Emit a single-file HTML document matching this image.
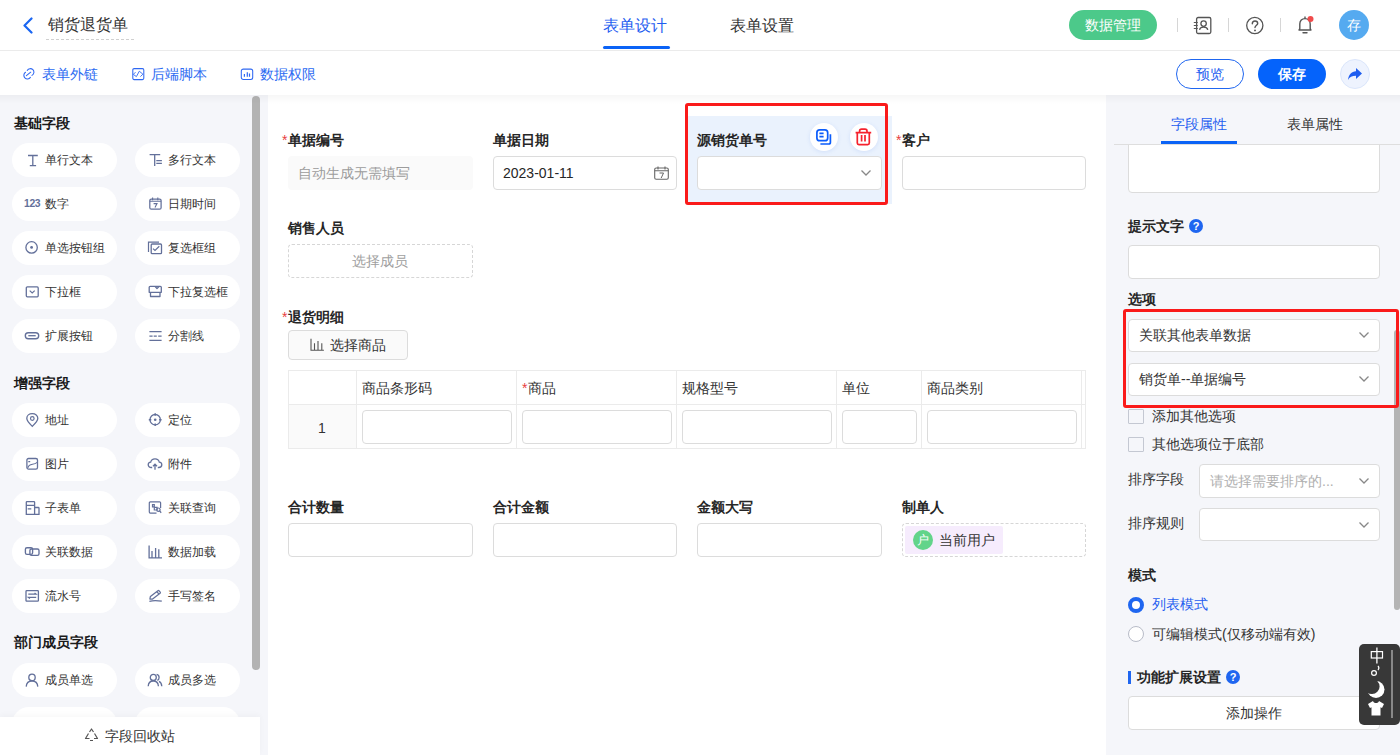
<!DOCTYPE html>
<html><head><meta charset="utf-8">
<style>
*{box-sizing:border-box;margin:0;padding:0}
html,body{width:1400px;height:755px;overflow:hidden;background:#fff;font-family:"Liberation Sans",sans-serif;color:#333}
.a{position:absolute}
svg{display:block}
/* header */
#hdr{left:0;top:0;width:1400px;height:51px;background:#fff;border-bottom:1px solid #ebebeb}
#bar2{left:0;top:51px;width:1400px;height:44px;background:#fff}
.t{white-space:nowrap;line-height:1}
.lnk{color:#2b6af2;font-size:14px}
.btnr{border-radius:15px;height:30px;font-size:14px;text-align:center;line-height:30px}
/* left panel */
#left{left:0;top:95px;width:268px;height:660px;background:#f5f6fa}
.sec{font-size:14px;font-weight:bold;color:#1a1a1a}
.pill{width:105px;height:34px;background:#fff;border-radius:17px}
.pill .ic{position:absolute;left:12px;top:10px;width:16px;height:16px;overflow:visible}
.pill .tx{position:absolute;left:33px;top:10px;font-size:12px;color:#333;line-height:14px;white-space:nowrap}
#center{left:268px;top:95px;width:838px;height:660px;background:#fff}
.lbl{font-size:14px;font-weight:bold;color:#262626;line-height:14px;white-space:nowrap}
.req{color:#e84040;font-weight:normal;position:absolute;left:-6px;top:0}
.inp{height:34px;border:1px solid #dcdcdc;border-radius:4px;background:#fff}
#right{left:1106px;top:95px;width:294px;height:660px;background:#f5f6fa}
.rl{font-size:14px;color:#262626;line-height:14px;white-space:nowrap}
</style></head><body>

<!-- ===== HEADER ===== -->
<div id="hdr" class="a"></div>
<svg class="a" style="left:22px;top:17px" width="12" height="17" viewBox="0 0 12 17"><path d="M9.5 1.5 L2.5 8.5 L9.5 15.5" fill="none" stroke="#1a66f2" stroke-width="2.2" stroke-linecap="round" stroke-linejoin="round"/></svg>
<div class="a t" style="left:48px;top:17px;font-size:16px;color:#333">销货退货单</div>
<div class="a" style="left:46px;top:39px;width:88px;border-top:1px dashed #d0d0d0"></div>

<div class="a t" style="left:603px;top:18px;font-size:16px;color:#1f5ef0">表单设计</div>
<div class="a" style="left:603px;top:46px;width:67px;height:3px;background:#0b63f6;border-radius:2px"></div>
<div class="a t" style="left:730px;top:18px;font-size:16px;color:#333">表单设置</div>

<div class="a btnr" style="left:1069px;top:10px;width:88px;background:#4cc98a;color:#fff">数据管理</div>
<div class="a" style="left:1177px;top:18px;width:1px;height:14px;background:#d6d6d6"></div>
<div class="a" style="left:1228px;top:18px;width:1px;height:14px;background:#d6d6d6"></div>
<div class="a" style="left:1280px;top:18px;width:1px;height:14px;background:#d6d6d6"></div>
<!-- contact icon -->
<svg class="a" style="left:1193px;top:16px" width="19" height="19" viewBox="0 0 19 19"><rect x="3.6" y="1.5" width="14.2" height="16" rx="1.5" fill="none" stroke="#555" stroke-width="1.3"/><circle cx="10.6" cy="7.6" r="2.7" fill="none" stroke="#555" stroke-width="1.3"/><path d="M6.6 13.8 C7.2 10.2 14 10.2 14.8 13.8" fill="none" stroke="#555" stroke-width="1.3"/><path d="M0.8 6.5h4M0.8 9.5h4M0.8 12.5h4" stroke="#555" stroke-width="1.1"/></svg>
<!-- help -->
<svg class="a" style="left:1245px;top:16px" width="20" height="20" viewBox="0 0 20 20"><circle cx="9.8" cy="9.5" r="8.1" fill="none" stroke="#555" stroke-width="1.3"/><path d="M7.3 7.8 C7.3 5.9 8.6 5 10 5 C11.6 5 12.7 6 12.7 7.4 C12.7 9.2 10 9.4 10 11.6" fill="none" stroke="#555" stroke-width="1.4" stroke-linecap="round"/><circle cx="10" cy="14.4" r="0.95" fill="#555"/></svg>
<!-- bell -->
<svg class="a" style="left:1296px;top:15px" width="19" height="20" viewBox="0 0 19 20"><path d="M3 15 L3.8 13.6 V9 C3.8 5.8 6 3.6 9 3.6 C12 3.6 14.2 5.8 14.2 9 V13.6 L15 15 Z" fill="none" stroke="#555" stroke-width="1.4" stroke-linejoin="round"/><path d="M7 17.8 H11" stroke="#555" stroke-width="1.4" stroke-linecap="round"/><path d="M9 1.5 V3.6" stroke="#555" stroke-width="1.4"/><circle cx="14.5" cy="4" r="3" fill="#f04b4b"/></svg>
<div class="a btnr" style="left:1339px;top:10px;width:30px;height:30px;border-radius:50%;background:#55aaf0;color:#fff;font-size:14px">存</div>

<!-- ===== BAR 2 ===== -->
<div id="bar2" class="a"></div>
<svg class="a" style="left:22px;top:68px" width="13" height="13" viewBox="0 0 13 13"><path d="M5.2 2.4 A3.6 3.6 0 1 1 10 7.4 M3.5 4.3 A3.6 3.6 0 1 0 8.4 9.4 M4.4 7.7 L8.7 4.2" fill="none" stroke="#2f68f2" stroke-width="1.05" stroke-linecap="round"/></svg>
<div class="a t lnk" style="left:42px;top:67px">表单外链</div>
<svg class="a" style="left:132px;top:68px" width="13" height="13" viewBox="0 0 13 13"><rect x="0.8" y="0.6" width="11" height="11" rx="1.3" fill="none" stroke="#2f68f2" stroke-width="1.05"/><path d="M3.5 4.2 L1.3 6.4 L4.4 8.6 L7.3 3.2 L10.9 6.2 L8.4 8.6" fill="none" stroke="#2f68f2" stroke-width="0.9" stroke-linejoin="round"/></svg>
<div class="a t lnk" style="left:151px;top:67px">后端脚本</div>
<svg class="a" style="left:240px;top:68px" width="14" height="13" viewBox="0 0 14 13"><rect x="1.3" y="1.1" width="11.4" height="10.3" rx="2" fill="none" stroke="#2f68f2" stroke-width="1.05"/><path d="M4.4 6 V8.8 M7.3 4.2 V8.8 M9.5 5.4 V8.8" stroke="#2f68f2" stroke-width="1.2"/></svg>
<div class="a t lnk" style="left:260px;top:67px">数据权限</div>

<div class="a btnr" style="left:1176px;top:59px;width:68px;border:1px solid #1f66f0;color:#1f5ef0;line-height:28px">预览</div>
<div class="a btnr" style="left:1258px;top:59px;width:68px;background:#0563fb;color:#fff;font-weight:bold">保存</div>
<div class="a" style="left:1340px;top:59px;width:30px;height:30px;border-radius:50%;background:#eef3fe;border:1px solid #dbe6fb"></div>
<svg class="a" style="left:1346px;top:66px" width="18" height="16" viewBox="0 0 18 16"><path d="M10 2 L16 7.5 L10 13 V9.8 C6 9.8 3.5 11 2 14 C2.5 8.8 5.5 5.6 10 5.2 Z" fill="#1f5ef0"/></svg>

<!-- ===== LEFT ===== -->
<div id="left" class="a"></div>
<div class="a t sec" style="left:14px;top:116px">基础字段</div>
<div class="a t sec" style="left:14px;top:376px">增强字段</div>
<div class="a t sec" style="left:14px;top:635px">部门成员字段</div>
<div class="a pill" style="left:12px;top:143px"><svg class="ic" width="16" height="16" viewBox="0 0 16 16"><path d="M4 2.5H13.8M8.8 2.5V12.7M5.8 12.7H12.1" stroke="#63709a" fill="none" stroke-width="1.3"/></svg><div class="tx">单行文本</div></div>
<div class="a pill" style="left:135px;top:143px"><svg class="ic" width="16" height="16" viewBox="0 0 16 16"><path d="M2.6 1.6H13.2M7.7 1.6V13.1M9.3 7.6H14.9M9.3 10.4H14.9" stroke="#63709a" fill="none" stroke-width="1.3"/></svg><div class="tx">多行文本</div></div>
<div class="a pill" style="left:12px;top:187px"><svg class="ic" width="16" height="16" viewBox="0 0 16 16"><text x="0" y="10" font-size="10.4" font-weight="bold" fill="#63709a" font-family="Liberation Sans" letter-spacing="-0.4">123</text></svg><div class="tx">数字</div></div>
<div class="a pill" style="left:135px;top:187px"><svg class="ic" width="16" height="16" viewBox="0 0 16 16"><rect x="2.8" y="2" width="11.3" height="10.2" rx="1.5" stroke="#63709a" fill="none" stroke-width="1.25"/><path d="M2.8 4.3H14.1M5.6 0.6V3.3M10.8 0.6V3.3M6.6 6.6H10L8 10.6" stroke="#63709a" fill="none" stroke-width="1.1"/></svg><div class="tx">日期时间</div></div>
<div class="a pill" style="left:12px;top:231px"><svg class="ic" width="16" height="16" viewBox="0 0 16 16"><circle cx="7.6" cy="6.4" r="5.7" stroke="#63709a" fill="none" stroke-width="1.3"/><circle cx="7.6" cy="6.4" r="1.4" fill="#63709a"/></svg><div class="tx">单选按钮组</div></div>
<div class="a pill" style="left:135px;top:231px"><svg class="ic" width="16" height="16" viewBox="0 0 16 16"><path d="M1.5 11V1.2H12" stroke="#63709a" fill="none" stroke-width="1.2"/><rect x="4.2" y="3" width="10.3" height="9.7" rx="1" stroke="#63709a" fill="none" stroke-width="1.3"/><path d="M6 7.6L8 9.5L12.3 5.3" stroke="#63709a" fill="none" stroke-width="1.2"/></svg><div class="tx">复选框组</div></div>
<div class="a pill" style="left:12px;top:275px"><svg class="ic" width="16" height="16" viewBox="0 0 16 16"><rect x="2.3" y="1.9" width="11.9" height="9.9" rx="1" stroke="#63709a" fill="none" stroke-width="1.3"/><path d="M5.7 5.6L8.2 7.9L10.7 5.6" stroke="#63709a" fill="none" stroke-width="1.2"/></svg><div class="tx">下拉框</div></div>
<div class="a pill" style="left:135px;top:275px"><svg class="ic" width="16" height="16" viewBox="0 0 16 16"><path d="M2.2 7.3V2.3C2.2 1.7 2.6 1.3 3.2 1.3H13.3C13.9 1.3 14.3 1.7 14.3 2.3V7.3ZM3.5 7.3V11.5H13V7.3M8.2 1.5L10 3.6L12 1.5" stroke="#63709a" fill="none" stroke-width="1.3" stroke-linejoin="round"/></svg><div class="tx">下拉复选框</div></div>
<div class="a pill" style="left:12px;top:319px"><svg class="ic" width="16" height="16" viewBox="0 0 16 16"><rect x="1.3" y="3.7" width="13.4" height="6" rx="3" stroke="#63709a" fill="none" stroke-width="1.35"/><path d="M4.3 6.7H11.7" stroke="#63709a" fill="none" stroke-width="1.3"/></svg><div class="tx">扩展按钮</div></div>
<div class="a pill" style="left:135px;top:319px"><svg class="ic" width="16" height="16" viewBox="0 0 16 16"><path d="M2.4 2.7H14.6M2.4 11.4H14.6M2.4 7.2H5.6M6.7 7.2H9.8M11.2 7.2H14.6" stroke="#63709a" fill="none" stroke-width="1.3"/></svg><div class="tx">分割线</div></div>
<div class="a pill" style="left:12px;top:403px"><svg class="ic" width="16" height="16" viewBox="0 0 16 16"><path d="M8.3 13.4C4.6 9.8 2.8 7.4 2.8 5.3C2.8 2.6 5.2 0.7 8.3 0.7C11.4 0.7 13.8 2.6 13.8 5.3C13.8 7.4 12 9.8 8.3 13.4Z" stroke="#63709a" fill="none" stroke-width="1.3"/><circle cx="8.3" cy="5.5" r="1.8" stroke="#63709a" fill="none" stroke-width="1.2"/></svg><div class="tx">地址</div></div>
<div class="a pill" style="left:135px;top:403px"><svg class="ic" width="16" height="16" viewBox="0 0 16 16"><circle cx="8.2" cy="6.7" r="5.2" stroke="#63709a" fill="none" stroke-width="1.3"/><circle cx="8.2" cy="6.7" r="1.3" fill="#63709a"/><path d="M8.2 0.3V2.8M8.2 10.6V13.1M1.8 6.7H4.3M12.1 6.7H14.6" stroke="#63709a" fill="none" stroke-width="1.4"/></svg><div class="tx">定位</div></div>
<div class="a pill" style="left:12px;top:447px"><svg class="ic" width="16" height="16" viewBox="0 0 16 16"><rect x="2.9" y="1.5" width="10.6" height="10.6" rx="1.6" stroke="#63709a" fill="none" stroke-width="1.3"/><path d="M3.8 10.8C4.5 8.3 6.5 7.6 8.5 7.3C10.4 7 11.9 6.4 13.2 5.4M4.3 4.6H6.2" stroke="#63709a" fill="none" stroke-width="1.15"/></svg><div class="tx">图片</div></div>
<div class="a pill" style="left:135px;top:447px"><svg class="ic" width="16" height="16" viewBox="0 0 16 16"><path d="M5.2 10.5H4.3C2.5 10.5 1.2 9.3 1.2 7.8C1.2 6.3 2.3 5.2 3.7 5.1C4.1 3.1 5.8 1.8 8 1.8C10.2 1.8 11.9 3.2 12.3 5.1C13.7 5.2 14.8 6.3 14.8 7.8C14.8 9.3 13.5 10.5 11.7 10.5H10.8" stroke="#63709a" fill="none" stroke-width="1.3"/><path d="M8 12.8V7.5M6 9.2L8 7.2L10 9.2" stroke="#63709a" fill="none" stroke-width="1.3"/></svg><div class="tx">附件</div></div>
<div class="a pill" style="left:12px;top:491px"><svg class="ic" width="16" height="16" viewBox="0 0 16 16"><path d="M2.3 13.3V1.3C2.3 0.9 2.6 0.6 3 0.6H9.9C10.3 0.6 10.6 0.9 10.6 1.3V13.3ZM10.6 6.5H14.3C14.7 6.5 15 6.8 15 7.2V13.3H10.6M2.3 4.3H10.6M3.7 7.9H7.3" stroke="#63709a" fill="none" stroke-width="1.3"/></svg><div class="tx">子表单</div></div>
<div class="a pill" style="left:135px;top:491px"><svg class="ic" width="16" height="16" viewBox="0 0 16 16"><path d="M13.6 7V1.9C13.6 1.3 13.2 0.9 12.6 0.9H3.3C2.7 0.9 2.3 1.3 2.3 1.9V11.1C2.3 11.7 2.7 12.1 3.3 12.1H9.5M5.5 3.6H7.3V5.8H5.5ZM7.3 6.3H10.1V9H7.3Z" stroke="#63709a" fill="none" stroke-width="1.2"/><circle cx="11.4" cy="8.7" r="1.7" stroke="#63709a" fill="none" stroke-width="1.2"/><path d="M12.6 9.9L14.2 11.7" stroke="#63709a" fill="none" stroke-width="1.3"/></svg><div class="tx">关联查询</div></div>
<div class="a pill" style="left:12px;top:535px"><svg class="ic" width="16" height="16" viewBox="0 0 16 16"><rect x="1.4" y="2.7" width="7.2" height="6.7" rx="1.6" fill="none" stroke="#63709a" stroke-width="1.35"/><rect x="5.9" y="4" width="9.1" height="6.3" rx="1.6" fill="none" stroke="#63709a" stroke-width="1.35"/></svg><div class="tx">关联数据</div></div>
<div class="a pill" style="left:135px;top:535px"><svg class="ic" width="16" height="16" viewBox="0 0 16 16"><path d="M2.1 0.5V12.8H15M5 6V12.8M8.6 2.9V12.8M11.8 4.2V12.8" stroke="#63709a" fill="none" stroke-width="1.3"/></svg><div class="tx">数据加载</div></div>
<div class="a pill" style="left:12px;top:579px"><svg class="ic" width="16" height="16" viewBox="0 0 16 16"><rect x="2" y="1.6" width="12.4" height="10.6" rx="0.8" stroke="#63709a" fill="none" stroke-width="1.3"/><path d="M4.3 5.2H12.2L10.6 3.9M12.2 8.3H4.3L5.9 9.6" stroke="#63709a" fill="none" stroke-width="1.2"/></svg><div class="tx">流水号</div></div>
<div class="a pill" style="left:135px;top:579px"><svg class="ic" width="16" height="16" viewBox="0 0 16 16"><path d="M2.9 10L3.4 7.4L10.9 1.7C11.3 1.4 11.8 1.5 12.1 1.8L13.2 3.1C13.5 3.5 13.4 4 13.1 4.3L5.6 10Z M9.8 2.8L12.1 5.1" stroke="#63709a" fill="none" stroke-width="1.25" stroke-linejoin="round"/><path d="M2.4 12.3C6 11.3 10 11.3 14.8 12.2" stroke="#63709a" fill="none" stroke-width="1.3"/></svg><div class="tx">手写签名</div></div>
<div class="a pill" style="left:12px;top:663px"><svg class="ic" width="16" height="16" viewBox="0 0 16 16"><circle cx="8" cy="4.4" r="3.2" stroke="#63709a" fill="none" stroke-width="1.3"/><path d="M2.2 13.6C2.5 9.6 4.8 8 8 8C11.2 8 13.5 9.6 13.8 13.6" stroke="#63709a" fill="none" stroke-width="1.3"/></svg><div class="tx">成员单选</div></div>
<div class="a pill" style="left:135px;top:663px"><svg class="ic" width="16" height="16" viewBox="0 0 16 16"><circle cx="6.3" cy="4.4" r="3" stroke="#63709a" fill="none" stroke-width="1.3"/><path d="M1.2 13.2C1.4 9.6 3.4 8 6.3 8C9.2 8 11.2 9.6 11.4 13.2M9.6 1.4C11.1 1.7 12.1 2.9 12.1 4.4C12.1 5.7 11.4 6.8 10.3 7.3M12 8.4C13.6 9.2 14.6 10.8 14.8 13.2" stroke="#63709a" fill="none" stroke-width="1.3"/></svg><div class="tx">成员多选</div></div>
<div class="a pill" style="left:12px;top:707px"><svg class="ic" width="16" height="16" viewBox="0 0 16 16"><circle cx="8" cy="4.4" r="3.2" stroke="#63709a" fill="none" stroke-width="1.3"/><path d="M2.2 13.6C2.5 9.6 4.8 8 8 8C11.2 8 13.5 9.6 13.8 13.6" stroke="#63709a" fill="none" stroke-width="1.3"/></svg><div class="tx">部门单选</div></div>
<div class="a pill" style="left:135px;top:707px"><svg class="ic" width="16" height="16" viewBox="0 0 16 16"><circle cx="6.3" cy="4.4" r="3" stroke="#63709a" fill="none" stroke-width="1.3"/><path d="M1.2 13.2C1.4 9.6 3.4 8 6.3 8C9.2 8 11.2 9.6 11.4 13.2M9.6 1.4C11.1 1.7 12.1 2.9 12.1 4.4C12.1 5.7 11.4 6.8 10.3 7.3M12 8.4C13.6 9.2 14.6 10.8 14.8 13.2" stroke="#63709a" fill="none" stroke-width="1.3"/></svg><div class="tx">部门多选</div></div>
<div class="a" style="left:252px;top:96px;width:8px;height:574px;background:#b3b3b3;border-radius:4px"></div>
<div class="a" style="left:0;top:717px;width:260px;height:38px;background:#fff;box-shadow:0 -2px 6px rgba(0,0,0,0.03)"></div>
<svg class="a" style="left:84px;top:728px" width="15" height="14" viewBox="0 0 15 14"><path d="M5.5 4 L7.5 1 L9.5 4 M10.5 5.5 L13.5 10.5 H10 M4.5 5.5 L1.5 10.5 H5.5 M6 12.5h3" fill="none" stroke="#555" stroke-width="1.2" stroke-linejoin="round"/></svg>
<div class="a t" style="left:105px;top:729px;font-size:14px;color:#333">字段回收站</div>

<!-- ===== CENTER ===== -->
<div id="center" class="a"></div>
<div class="a" style="left:688px;top:116px;width:204px;height:88px;background:#eaf2fd"></div>
<div class="a lbl" style="left:288px;top:133px"><span class="req">*</span>单据编号</div>
<div class="a lbl" style="left:493px;top:133px">单据日期</div>
<div class="a lbl" style="left:697px;top:133px">源销货单号</div>
<div class="a lbl" style="left:902px;top:133px"><span class="req">*</span>客户</div>
<div class="a" style="left:288px;top:156px;width:185px;height:34px;background:#fafafa;border-radius:4px"></div>
<div class="a t" style="left:298px;top:166px;font-size:14px;color:#9c9c9c">自动生成无需填写</div>
<div class="a inp" style="left:493px;top:156px;width:184px"></div>
<div class="a t" style="left:503px;top:166px;font-size:14px;color:#262626">2023-01-11</div>
<svg class="a" style="left:654px;top:166px" width="15" height="14" viewBox="0 0 15 14"><rect x="0.7" y="2" width="13.6" height="11.3" rx="1.5" fill="none" stroke="#666" stroke-width="1.1"/><path d="M0.7 4.8h13.6M4 0.5v3M11 0.5v3" stroke="#666" stroke-width="1.1"/><path d="M5.5 7h4l-2.3 5" fill="none" stroke="#666" stroke-width="1"/></svg>
<div class="a inp" style="left:697px;top:156px;width:185px"></div>
<svg class="a" style="left:860px;top:169px" width="12" height="8" viewBox="0 0 12 8"><path d="M1.5 1.5 L6 6 L10.5 1.5" fill="none" stroke="#888" stroke-width="1.3"/></svg>
<div class="a inp" style="left:902px;top:156px;width:184px"></div>
<div class="a" style="left:810px;top:123px;width:28px;height:28px;border-radius:50%;background:#fff;box-shadow:0 1px 4px rgba(40,100,220,0.12)"></div>
<svg class="a" style="left:815px;top:128px" width="18" height="18" viewBox="0 0 18 18"><rect x="1.9" y="1.9" width="10.8" height="10.8" rx="2.8" fill="none" stroke="#0b5cfb" stroke-width="1.7"/><path d="M4.4 5.4H8.6M4.4 8.6H8.6" stroke="#0b5cfb" stroke-width="1.6"/><path d="M15.4 6.3V14.2C15.4 15.2 14.8 16 13.8 16H5.4" fill="none" stroke="#0b5cfb" stroke-width="1.7"/></svg>
<div class="a" style="left:850px;top:123px;width:28px;height:28px;border-radius:50%;background:#fff;box-shadow:0 1px 4px rgba(40,100,220,0.12)"></div>
<svg class="a" style="left:855px;top:127px" width="18" height="19" viewBox="0 0 18 19"><path d="M0.6 5.6H16.2M4.6 5.6V4C4.6 2.8 5.5 2.1 6.6 2.1H10C11.1 2.1 12 2.8 12 4V5.6M2.3 5.6V16C2.3 17 3 17.6 3.9 17.6H12.7C13.6 17.6 14.3 17 14.3 16V5.6M6.6 8.1V14.4M10 8.1V14.4" fill="none" stroke="#f5222d" stroke-width="1.7"/></svg>
<div class="a" style="left:685px;top:103px;width:203px;height:102px;border:3px solid #fa1a1a;border-radius:3px"></div>
<div class="a lbl" style="left:288px;top:221px">销售人员</div>
<div class="a" style="left:288px;top:244px;width:185px;height:34px;border:1px dashed #d6d6d6;border-radius:4px"></div>
<div class="a t" style="left:352px;top:254px;font-size:14px;color:#a0a0a0">选择成员</div>
<div class="a lbl" style="left:288px;top:310px"><span class="req">*</span>退货明细</div>
<div class="a" style="left:288px;top:330px;width:120px;height:30px;border:1px solid #dcdcdc;border-radius:4px;background:#fafafa"></div>
<svg class="a" style="left:310px;top:338px" width="14" height="13" viewBox="0 0 14 13"><path d="M1 0.7V12.3H13.9M4.5 5.3v6.5M8 3v8.8M11.8 5.3v6.5" stroke="#555" stroke-width="1.1" fill="none"/></svg>
<div class="a t" style="left:330px;top:338px;font-size:14px;color:#333">选择商品</div>
<div class="a" style="left:288px;top:370px;width:798px;height:79px;border:1px solid #ebebeb"></div>
<div class="a" style="left:289px;top:405px;width:67px;height:43px;background:#fafafa"></div>
<div class="a" style="left:288px;top:404px;width:798px;height:1px;background:#ebebeb"></div>
<div class="a" style="left:356px;top:370px;width:1px;height:79px;background:#ebebeb"></div>
<div class="a" style="left:516px;top:370px;width:1px;height:79px;background:#ebebeb"></div>
<div class="a" style="left:676px;top:370px;width:1px;height:79px;background:#ebebeb"></div>
<div class="a" style="left:836px;top:370px;width:1px;height:79px;background:#ebebeb"></div>
<div class="a" style="left:921px;top:370px;width:1px;height:79px;background:#ebebeb"></div>
<div class="a" style="left:1081px;top:370px;width:1px;height:79px;background:#ebebeb"></div>
<div class="a t" style="left:362px;top:381px;font-size:14px;color:#333">商品条形码</div>
<div class="a t" style="left:528px;top:381px;font-size:14px;color:#333"><span class="req">*</span>商品</div>
<div class="a t" style="left:682px;top:381px;font-size:14px;color:#333">规格型号</div>
<div class="a t" style="left:842px;top:381px;font-size:14px;color:#333">单位</div>
<div class="a t" style="left:927px;top:381px;font-size:14px;color:#333">商品类别</div>
<div class="a t" style="left:318px;top:421px;font-size:14px;color:#333">1</div>
<div class="a inp" style="left:362px;top:410px;width:150px;height:34px"></div>
<div class="a inp" style="left:522px;top:410px;width:150px;height:34px"></div>
<div class="a inp" style="left:682px;top:410px;width:150px;height:34px"></div>
<div class="a inp" style="left:842px;top:410px;width:75px;height:34px"></div>
<div class="a inp" style="left:927px;top:410px;width:150px;height:34px"></div>
<div class="a lbl" style="left:288px;top:500px">合计数量</div>
<div class="a lbl" style="left:493px;top:500px">合计金额</div>
<div class="a lbl" style="left:697px;top:500px">金额大写</div>
<div class="a lbl" style="left:902px;top:500px">制单人</div>
<div class="a inp" style="left:288px;top:523px;width:185px"></div>
<div class="a inp" style="left:493px;top:523px;width:184px"></div>
<div class="a inp" style="left:697px;top:523px;width:185px"></div>
<div class="a" style="left:902px;top:523px;width:184px;height:34px;border:1px dashed #d6d6d6;border-radius:4px"></div>
<div class="a" style="left:905px;top:526px;width:98px;height:28px;background:#f6ecfd;border-radius:2px"></div>
<div class="a" style="left:913px;top:530px;width:20px;height:20px;border-radius:50%;background:#62d48a;color:#fff;font-size:12px;line-height:20px;text-align:center">户</div>
<div class="a t" style="left:939px;top:533px;font-size:14px;color:#333">当前用户</div>

<!-- ===== RIGHT ===== -->
<div id="right" class="a"></div>
<div class="a" style="left:1128px;top:120px;width:252px;height:73px;background:#fff;border:1px solid #dcdcdc;border-radius:4px"></div>
<div class="a" style="left:1106px;top:95px;width:294px;height:50px;background:#f5f6fa"></div>
<div class="a" style="left:1114px;top:144px;width:286px;height:1px;background:#dedede"></div>
<div class="a t" style="left:1171px;top:117px;font-size:14px;color:#1f5ef0">字段属性</div>
<div class="a" style="left:1161px;top:141px;width:76px;height:3px;background:#0b63f6"></div>
<div class="a t" style="left:1287px;top:117px;font-size:14px;color:#333">表单属性</div>
<div class="a lbl" style="left:1128px;top:219px">提示文字</div>
<div class="a" style="left:1189px;top:219px;width:14px;height:14px;border-radius:50%;background:#1f66f0;color:#fff;font-size:11px;font-weight:bold;line-height:14px;text-align:center">?</div>
<div class="a inp" style="left:1128px;top:245px;width:252px;height:34px"></div>
<div class="a lbl" style="left:1128px;top:292px">选项</div>
<div class="a inp" style="left:1128px;top:319px;width:252px;height:33px"></div>
<div class="a t" style="left:1139px;top:328px;font-size:14px;color:#333">关联其他表单数据</div>
<svg class="a" style="left:1358px;top:331px" width="12" height="8" viewBox="0 0 12 8"><path d="M1.5 1.5 L6 6 L10.5 1.5" fill="none" stroke="#888" stroke-width="1.3"/></svg>
<div class="a inp" style="left:1128px;top:363px;width:252px;height:33px"></div>
<div class="a t" style="left:1139px;top:372px;font-size:14px;color:#333">销货单--单据编号</div>
<svg class="a" style="left:1358px;top:375px" width="12" height="8" viewBox="0 0 12 8"><path d="M1.5 1.5 L6 6 L10.5 1.5" fill="none" stroke="#888" stroke-width="1.3"/></svg>
<div class="a" style="left:1394px;top:330px;width:6px;height:280px;background:#b4b4b4;border-radius:3px"></div>
<div class="a" style="left:1123px;top:309px;width:276px;height:99px;border:3px solid #fa1a1a;border-radius:3px"></div>
<div class="a" style="left:1128px;top:409px;width:16px;height:15px;border:1px solid #c4c8d2;border-radius:1px;background:transparent"></div>
<div class="a t" style="left:1152px;top:409px;font-size:14px;color:#333">添加其他选项</div>
<div class="a" style="left:1128px;top:437px;width:16px;height:15px;border:1px solid #c4c8d2;border-radius:1px;background:transparent"></div>
<div class="a t" style="left:1152px;top:437px;font-size:14px;color:#333">其他选项位于底部</div>
<div class="a t" style="left:1128px;top:472px;font-size:14px;color:#333">排序字段</div>
<div class="a inp" style="left:1199px;top:464px;width:181px;height:34px"></div>
<div class="a t" style="left:1210px;top:474px;font-size:14px;color:#b0b0b0">请选择需要排序的...</div>
<svg class="a" style="left:1358px;top:477px" width="12" height="8" viewBox="0 0 12 8"><path d="M1.5 1.5 L6 6 L10.5 1.5" fill="none" stroke="#888" stroke-width="1.3"/></svg>
<div class="a t" style="left:1128px;top:516px;font-size:14px;color:#333">排序规则</div>
<div class="a inp" style="left:1199px;top:508px;width:181px;height:33px"></div>
<svg class="a" style="left:1358px;top:521px" width="12" height="8" viewBox="0 0 12 8"><path d="M1.5 1.5 L6 6 L10.5 1.5" fill="none" stroke="#888" stroke-width="1.3"/></svg>
<div class="a lbl" style="left:1128px;top:568px">模式</div>
<div class="a" style="left:1128px;top:597px;width:16px;height:16px;border-radius:50%;border:4px solid #1f66f0;background:#fff"></div>
<div class="a t" style="left:1152px;top:597px;font-size:14px;color:#1f5ef0">列表模式</div>
<div class="a" style="left:1128px;top:626px;width:16px;height:16px;border-radius:50%;border:1px solid #b8bcc8;background:#fff"></div>
<div class="a t" style="left:1152px;top:627px;font-size:14px;color:#333">可编辑模式(仅移动端有效)</div>
<div class="a" style="left:1128px;top:671px;width:3px;height:13px;background:#1f66f0"></div>
<div class="a lbl" style="left:1137px;top:670px">功能扩展设置</div>
<div class="a" style="left:1226px;top:670px;width:14px;height:14px;border-radius:50%;background:#1f66f0;color:#fff;font-size:11px;font-weight:bold;line-height:14px;text-align:center">?</div>
<div class="a" style="left:1128px;top:696px;width:252px;height:34px;background:#fff;border:1px solid #dcdcdc;border-radius:4px;font-size:14px;color:#333;text-align:center;line-height:32px">添加操作</div>
<div class="a" style="left:1359px;top:644px;width:41px;height:81px;background:#383838;border-radius:5px"></div>
<div class="a" style="left:1391px;top:650px;width:2px;height:68px;background:#888"></div>
<svg class="a" style="left:1370px;top:647px" width="14" height="17" viewBox="0 0 14 17"><rect x="1.3" y="4.6" width="11.2" height="6.4" fill="none" stroke="#fff" stroke-width="1.2"/><path d="M6.9 0.6V16.6" stroke="#fff" stroke-width="1.3"/></svg>
<svg class="a" style="left:1370px;top:665px" width="12" height="12" viewBox="0 0 12 12"><circle cx="4" cy="8" r="2.4" fill="none" stroke="#fff" stroke-width="1.2"/><path d="M8 1 A3 3 0 0 1 8 5" fill="none" stroke="#fff" stroke-width="1.2"/></svg>
<svg class="a" style="left:1367px;top:680px" width="18" height="19" viewBox="0 0 18 19"><defs><mask id="mm"><rect width="18" height="19" fill="#fff"/><circle cx="5" cy="6.5" r="7.6" fill="#000"/></mask></defs><circle cx="9" cy="9.5" r="8.5" fill="#fff" mask="url(#mm)"/></svg>
<svg class="a" style="left:1367px;top:700px" width="18" height="16" viewBox="0 0 18 16"><path d="M6 1 L1 4 L3 8 L4.5 7.2 V15.5 H13.5 V7.2 L15 8 L17 4 L12 1 C11.5 2.5 10.5 3 9 3 C7.5 3 6.5 2.5 6 1Z" fill="#fff"/></svg>

<div class="a" style="left:0;top:95px;width:1400px;height:9px;background:linear-gradient(rgba(0,0,0,0.035),rgba(0,0,0,0))"></div>
</body></html>
